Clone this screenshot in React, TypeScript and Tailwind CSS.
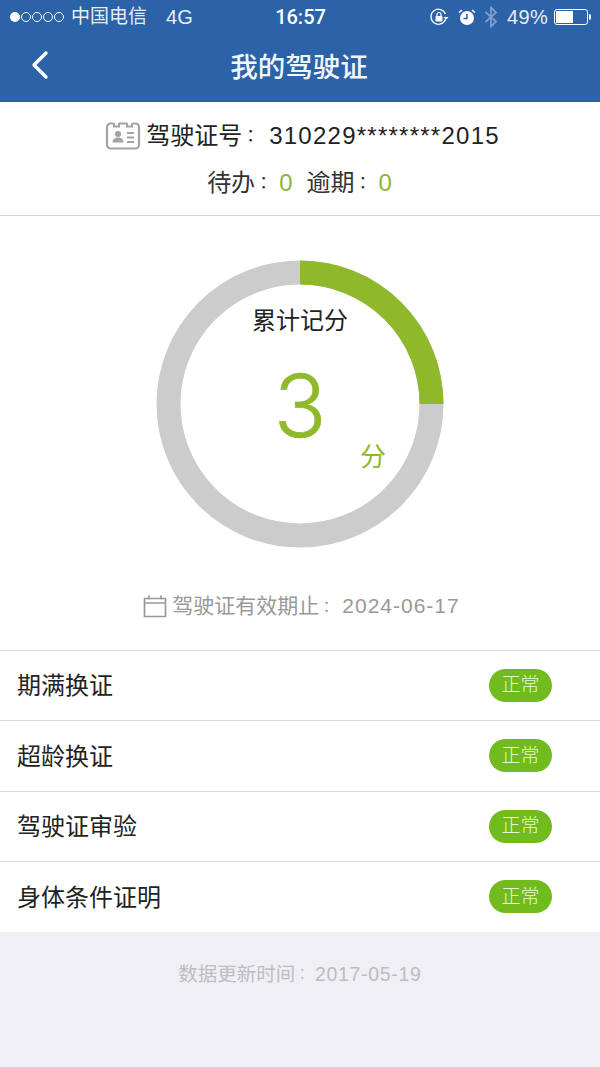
const font = { fontFamily: '"Liberation Sans", "Noto Sans CJK SC", sans-serif' }

// the SC colon sits low in its cell, the KR one is centred vertically
function Colon() {
  return <span className="relative top-[-0.1em] mr-[0.43em] font-['Noto_Sans_CJK_KR'] text-[0.7em]">：</span>
}

function StatusBar() {
  return (
    <div className="flex h-[34px] items-center justify-between pl-[10px] pr-[9px] text-[19px] leading-[34px] text-[#e6edf6]">
      <div className="flex w-[200px] items-center">
        <div className="flex items-center gap-[1px]">
          <span className="h-[10px] w-[10px] rounded-full bg-white" />
          <span className="h-[10px] w-[10px] rounded-full border border-white" />
          <span className="h-[10px] w-[10px] rounded-full border border-white" />
          <span className="h-[10px] w-[10px] rounded-full border border-white" />
          <span className="h-[10px] w-[10px] rounded-full border border-white" />
        </div>
        <span className="ml-[7px]">中国电信</span>
        <span className="ml-[19px] text-[20px]">4G</span>
      </div>
      <span className="font-['Roboto'] text-[20px] font-medium text-white">16:57</span>
      <div className="flex w-[200px] items-center justify-end">
        <svg width="20" height="20" viewBox="0 0 20 20" fill="none" className="mr-[9px]">
          <path d="M16.5 12.5A7.5 7.5 0 1 1 16.5 7" stroke="#fff" strokeWidth="1.3" />
          <path d="M14.5 10h5l-2.5 3z" fill="#fff" />
          <rect x="6.5" y="9" width="7" height="5.5" rx="1" fill="#fff" />
          <path d="M8 9V7.5a2 2 0 0 1 4 0V9" stroke="#fff" strokeWidth="1.2" />
        </svg>
        <svg width="18" height="18" viewBox="0 0 18 18" fill="none" className="mr-[8px]">
          <circle cx="9" cy="10" r="7" fill="#fff" />
          <path d="M9 6v4.5H5.5" stroke="#2b62a8" strokeWidth="1.5" />
          <path d="M1 4.5 4 2M17 4.5 14 2" stroke="#fff" strokeWidth="1.6" />
        </svg>
        <svg width="14" height="22" viewBox="0 0 14 22" fill="none" className="mr-[9px]">
          <path d="M1.5 6 12 15.5 7 20.5V1.5L12 6.5 1.5 16" stroke="#7c9fcc" strokeWidth="1.8" />
        </svg>
        <span className="text-[20px] tracking-[0.3px]">49%</span>
        <div className="ml-[6px] flex h-[16px] w-[34px] rounded-[3px] border border-white p-[1px]">
          <div className="h-full w-[17px] bg-white" />
        </div>
        <span className="ml-[1px] h-[6px] w-[2px] rounded-r-full bg-white" />
      </div>
    </div>
  )
}

function StatusRow({ label }: { label: string }) {
  return (
    <div className="flex h-[70.5px] items-center justify-between border-t border-[#d9d9d9] pl-[17px] pr-[48px]">
      <span className="pt-[2px] text-[24px] text-[#222]">{label}</span>
      <span className="flex h-[33px] w-[63px] items-center justify-center rounded-full bg-[#72bb1e] text-[19px] font-light text-[#e9f7d4]">正常</span>
    </div>
  )
}

export default function App() {
  return (
    <div className="flex h-[1067px] w-[600px] flex-col overflow-hidden bg-[#efeff4]" style={font}>
      <header className="h-[102px] shrink-0 bg-[#2b62a8]">
        <StatusBar />
        <div className="relative flex h-[68px] items-center justify-center pr-[2px]">
          <svg width="18" height="30" viewBox="0 0 18 30" fill="none" className="absolute left-[31px] top-[16px]">
            <path d="M15 3 3 15l12 12" stroke="#fff" strokeWidth="3.4" strokeLinecap="round" strokeLinejoin="round" />
          </svg>
          <span className="text-[27.5px] font-medium text-[#f2f5fa]">我的驾驶证</span>
        </div>
      </header>

      <section className="h-[114px] shrink-0 border-b border-[#d5d5d5] bg-white">
        <div className="flex h-[68px] items-center justify-center pl-[5px] text-[24px] text-[#222]">
          <svg width="36" height="32" viewBox="0 0 36 32" fill="none" className="mr-[5px]">
            <path d="M8 3.5H5.5a3.5 3.5 0 0 0-3.5 3.5v18a3.5 3.5 0 0 0 3.5 3.5h25a3.5 3.5 0 0 0 3.5-3.5V7a3.5 3.5 0 0 0-3.5-3.5H28" stroke="#a3a3a3" strokeWidth="2.2" />
            <path d="M9 3v3.5h5V3m8 0v3.5h5V3M14 3.5h8" stroke="#a3a3a3" strokeWidth="2" />
            <circle cx="13" cy="14" r="3" fill="#a3a3a3" />
            <path d="M7.5 22.5c0-3.2 2.4-5 5.5-5s5.5 1.8 5.5 5z" fill="#a3a3a3" />
            <path d="M22 13h7M22 17.5h7M22 22h7" stroke="#a3a3a3" strokeWidth="2" />
          </svg>
          <span>驾驶证号<Colon /></span>
          <span className="ml-[3px] tracking-[1.25px]">310229********2015</span>
        </div>
        <div className="mt-[-1px] flex justify-center pr-[1px] text-[24px] leading-[28px] text-[#333]">
          <span>待办<Colon /></span>
          <span className="font-light text-[#8db33a]">0</span>
          <span className="ml-[14px]">逾期<Colon /></span>
          <span className="font-light text-[#8db33a]">0</span>
        </div>
      </section>

      <section className="flex h-[433.5px] shrink-0 flex-col items-center bg-white pt-[44px]">
        <div className="relative h-[288px] w-[288px]">
          <svg width="288" height="288" viewBox="0 0 288 288" fill="none">
            <circle cx="144" cy="144" r="131.5" stroke="#cccccc" strokeWidth="24" />
            <path d="M144 12.5A131.5 131.5 0 0 1 275.5 144" stroke="#8fb82b" strokeWidth="24" />
          </svg>
          <span className="absolute left-0 right-0 top-[43px] text-center text-[24px] text-[#222]">累计记分</span>
          <span className="absolute left-0 right-0 top-[96px] text-center font-['Inter'] text-[87px] font-light leading-[100px] text-[#8fb82b] [-webkit-text-stroke:0.6px_#8fb82b]">3</span>
          <span className="absolute left-[204px] top-[178px] text-[26px] text-[#8fb82b]">分</span>
        </div>
        <div className="mt-[42px] flex items-center pl-[4px] text-[21px] text-[#999]">
          <svg width="24" height="24" viewBox="0 0 24 24" fill="none" className="mr-[5px] ml-[-1px]">
            <path d="M1.5 4.5h21v18h-21zM1.5 9h21M6 1.5v4M18 1.5v4" stroke="#999" strokeWidth="1.7" />
          </svg>
          <span>驾驶证有效期止<Colon /></span>
          <span className="ml-[2px] tracking-[1px]">2024-06-17</span>
        </div>
      </section>

      <section className="bg-white">
        <StatusRow label="期满换证" />
        <StatusRow label="超龄换证" />
        <StatusRow label="驾驶证审验" />
        <StatusRow label="身体条件证明" />
      </section>

      <footer className="pt-[28px] text-center text-[19.5px] text-[#bdbdc2]">
        数据更新时间<Colon /><span className="tracking-[0.7px]">2017-05-19</span>
      </footer>
    </div>
  )
}
